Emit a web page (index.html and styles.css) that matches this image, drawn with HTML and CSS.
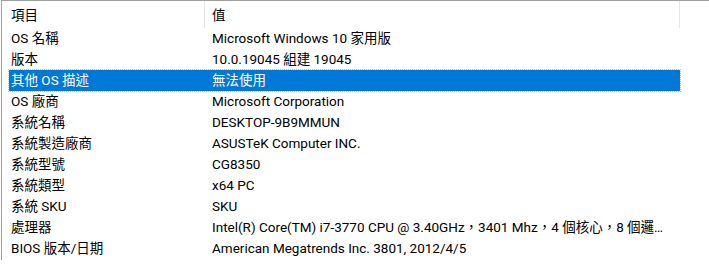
FILE: index.html
```html
<!DOCTYPE html>
<html lang="zh-Hant">
<head>
<meta charset="utf-8">
<title>系統摘要</title>
<link rel="stylesheet" href="styles.css">
</head>
<body>
<div class="listview">
  <div class="header">
    <div class="hcell col-item">項目</div>
    <div class="hcell col-value">值</div>
    <div class="hcell col-rest"></div>
  </div>
  <div class="rows">
    <div class="row"><div class="cell col-item">OS 名稱</div><div class="cell col-value">Microsoft Windows 10 家用版</div></div>
    <div class="row"><div class="cell col-item">版本</div><div class="cell col-value">10.0.19045 組建 19045</div></div>
    <div class="row selected"><div class="cell col-item">其他 OS 描述</div><div class="cell col-value">無法使用</div></div>
    <div class="row"><div class="cell col-item">OS 廠商</div><div class="cell col-value">Microsoft Corporation</div></div>
    <div class="row"><div class="cell col-item">系統名稱</div><div class="cell col-value">DESKTOP-9B9MMUN</div></div>
    <div class="row"><div class="cell col-item">系統製造廠商</div><div class="cell col-value">ASUSTeK Computer INC.</div></div>
    <div class="row"><div class="cell col-item">系統型號</div><div class="cell col-value">CG8350</div></div>
    <div class="row"><div class="cell col-item">系統類型</div><div class="cell col-value">x64 PC</div></div>
    <div class="row"><div class="cell col-item">系統 SKU</div><div class="cell col-value">SKU</div></div>
    <div class="row"><div class="cell col-item">處理器</div><div class="cell col-value">Intel(R) Core(TM) i7-3770 CPU @ 3.40GHz，3401 Mhz，4 個核心，8 個邏輯處理器</div></div>
    <div class="row"><div class="cell col-item">BIOS 版本/日期</div><div class="cell col-value">American Megatrends Inc. 3801, 2012/4/5</div></div>
  </div>
</div>
</body>
</html>
```
FILE: styles.css
```css
html, body {
  margin: 0;
  padding: 0;
  background: #ffffff;
}

body {
  font-family: Roboto, "Noto Sans CJK TC", sans-serif;
  font-size: 13.5px;
  color: #000000;
}

.listview {
  width: 708px;
  height: 260px;
  border-top: 1px solid #a0a0a0;
  border-left: 1px solid #a0a0a0;
  margin-left: 1px;
  box-sizing: border-box;
}

.header {
  display: flex;
  height: 27px;
  align-items: stretch;
}

.hcell {
  display: flex;
  align-items: center;
  box-sizing: border-box;
  border-right: 1px solid #e5e5e5;
  padding-bottom: 1px;
}

.hcell.col-rest {
  border-right: none;
  flex: 1;
}

.col-item {
  width: 203px;
  box-sizing: border-box;
  padding-left: 9px;
}

.col-value {
  width: 475px;
  box-sizing: border-box;
  padding-left: 7px;
  white-space: nowrap;
  overflow: hidden;
  text-overflow: ellipsis;
  padding-right: 12px;
}

.rows {
  display: flex;
  flex-direction: column;
}

.row {
  display: flex;
  height: 21px;
  align-items: center;
  width: 678px;
  box-sizing: border-box;
}

.cell {
  line-height: 21px;
}

.row.selected {
  background: #0078d7;
  color: #ffffff;
  margin-left: 7px;
  width: 671px;
  outline: 1px dotted #b8c8d8;
}

.row.selected .col-item {
  width: 196px;
  padding-left: 2px;
}
```
